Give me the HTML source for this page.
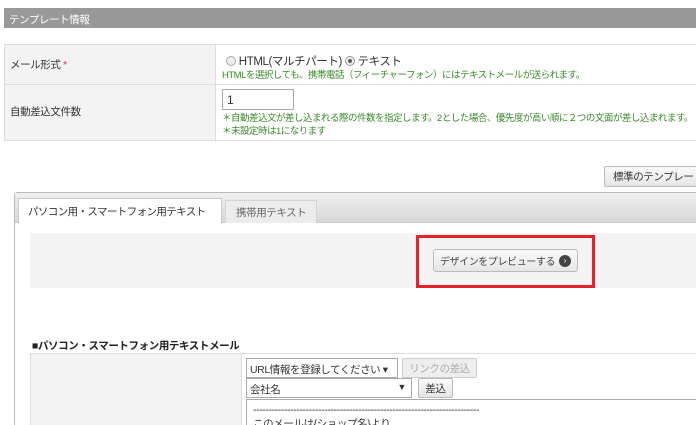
<!DOCTYPE html>
<html><head><meta charset="utf-8"><style>
*{box-sizing:border-box;margin:0;padding:0}
html,body{width:696px;height:425px;overflow:hidden}
body{background:#fff;font-family:"Liberation Sans","Noto Sans CJK JP",sans-serif;font-size:11px;color:#333;position:relative;letter-spacing:-0.4px}
.a{position:absolute;white-space:nowrap;overflow:hidden}
.g{color:#3a8a2a;font-size:9.5px;letter-spacing:-0.5px}
.btn{position:absolute;border:1px solid #bbb;border-radius:2px;background:linear-gradient(#fafafa,#e6e6e6);font-size:10.5px;display:flex;align-items:center;justify-content:center;white-space:nowrap;overflow:hidden}
</style></head><body>
<div class="a" style="left:4px;top:8px;width:692px;height:20px;background:#999;color:#fff;padding:4px 0 0 5px;font-size:10.5px">テンプレート情報</div>

<div class="a" style="left:4px;top:44px;width:692px;height:97px;border:1px solid #ddd;border-right:none"></div>
<div class="a" style="left:5px;top:45px;width:211px;height:95px;background:#f3f3f3;border-right:1px solid #ddd"></div>
<div class="a" style="left:5px;top:84px;width:691px;height:1px;background:#ddd"></div>
<div class="a" style="left:10px;top:57px;font-size:10.5px">メール形式 <span style="color:#e03040">*</span></div>
<div class="a" style="left:10px;top:104px;font-size:10.5px">自動差込文件数</div>
<div class="a" style="left:226px;top:53px;font-size:11.5px"><span style="display:inline-block;width:10px;height:10px;border:1px solid #aaa;border-radius:50%;background:#eee;vertical-align:-1px"></span> HTML(マルチパート) <span style="display:inline-block;width:10px;height:10px;border:1px solid #999;border-radius:50%;background:radial-gradient(#555 30%,#eee 40%);vertical-align:-1px"></span> テキスト</div>
<div class="a g" style="left:222px;top:67px">HTMLを選択しても、携帯電話（フィーチャーフォン）にはテキストメールが送られます。</div>
<div class="a" style="left:222px;top:89px;width:72px;height:21px;border:1px solid #aaa;padding:3px 4px;font-size:12px">1</div>
<div class="a g" style="left:222px;top:110px;width:474px">＊自動差込文が差し込まれる際の件数を指定します。2とした場合、優先度が高い順に２つの文面が差し込まれます。</div>
<div class="a g" style="left:222px;top:123px">＊未設定時は1になります</div>

<div class="btn" style="left:604px;top:166px;width:92px;height:21px;justify-content:flex-start;padding-left:8px;border-right:none;border-radius:2px 0 0 2px">標準のテンプレート</div>

<div class="a" style="left:14px;top:192px;width:682px;height:233px;border:1px solid #bbb;border-bottom:none;border-right:none;border-radius:3px 0 0 0"></div>
<div class="a" style="left:15px;top:193px;width:681px;height:30px;background:linear-gradient(#f0f0f0,#d8d8d8);border-bottom:1px solid #ccc"></div>
<div class="a" style="left:18px;top:198px;width:204px;height:26px;background:#fff;border:1px solid #ccc;border-bottom:none;padding:5px 0 0 9px;font-size:10.5px;letter-spacing:-0.6px">パソコン用・スマートフォン用テキスト</div>
<div class="a" style="left:225px;top:200px;width:92px;height:23px;background:#ececec;border:1px solid #d4d4d4;border-bottom:none;padding:4px 0 0 10px;font-size:10.5px;color:#666">携帯用テキスト</div>

<div class="a" style="left:30px;top:233px;width:666px;height:55px;background:#f4f4f4"></div>
<div class="a" style="left:416px;top:235px;width:179px;height:53px;border:3px solid #e8202a"></div>
<div class="btn" style="left:433px;top:249px;width:145px;height:23px;border-radius:3px;color:#444;font-size:10px">デザインをプレビューする <span style="display:inline-block;width:12px;height:12px;border-radius:50%;background:#444;color:#fff;font-size:8px;line-height:12px;text-align:center;margin-left:4px;letter-spacing:0">›</span></div>

<div class="a" style="left:32px;top:338px;font-weight:bold;font-size:10.5px;color:#222">■パソコン・スマートフォン用テキストメール</div>
<div class="a" style="left:30px;top:353px;width:666px;height:72px;border-top:1px solid #ddd;border-left:1px solid #ddd"></div>
<div class="a" style="left:31px;top:354px;width:211px;height:71px;background:#f3f3f3;border-right:1px solid #ddd"></div>
<div class="a" style="left:246px;top:358px;width:152px;height:20px;border:1px solid #aaa;padding:3px 3px;font-size:10.5px">URL情報を登録してください ▾</div>
<div class="btn" style="left:402px;top:358px;width:75px;height:20px;color:#aaa;border-color:#ccc;background:#eee">リンクの差込</div>
<div class="a" style="left:246px;top:378px;width:166px;height:20px;border:1px solid #aaa;padding:3px 3px;font-size:10.5px">会社名<span style="position:absolute;right:5px;font-size:9px">▼</span></div>
<div class="btn" style="left:418px;top:378px;width:35px;height:20px">差込</div>
<div class="a" style="left:246px;top:399px;width:450px;height:26px;border:1px solid #aaa;border-right:none;border-bottom:none;padding:3px 6px;font-size:10.5px;line-height:14px">-------------------------------------------------------------------------<br>このメールは{ショップ名}より。</div>
</body></html>
